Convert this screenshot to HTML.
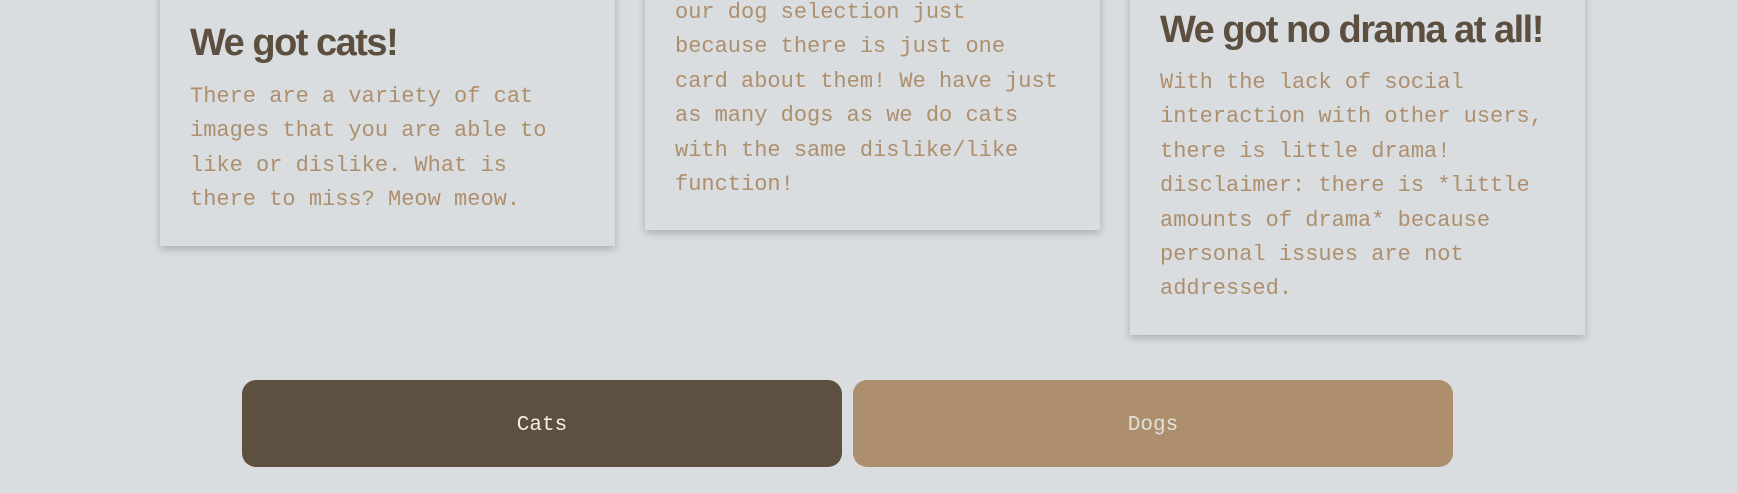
<!DOCTYPE html>
<html><head><meta charset="utf-8"><style>
html,body{margin:0;padding:0;}
body{width:1737px;height:493px;background:#dadde0;position:relative;overflow:hidden;}
.card{position:absolute;width:455px;background:#dadde0;box-shadow:0 3px 8px rgba(0,0,0,0.22);}
.h{position:absolute;left:30px;font-family:"Liberation Sans",sans-serif;font-weight:bold;font-size:38px;color:#5c4f3f;letter-spacing:-1.5px;white-space:nowrap;line-height:40px;}
.t{position:absolute;left:30px;font-family:"Liberation Mono",monospace;font-size:22px;line-height:34.4px;color:#ad8f6d;white-space:pre;}
.btn{position:absolute;top:380px;height:87px;border-radius:14px;font-family:"Liberation Mono",monospace;font-size:21px;text-align:center;line-height:91px;}
</style></head><body>
<div class="card" style="left:160px;top:-20px;height:266px;">
<div class="h" style="top:43px;">We got cats!</div>
<div class="t" style="top:100px;">There are a variety of cat
images that you are able to
like or dislike. What is
there to miss? Meow meow.</div>
</div>
<div class="card" style="left:645px;top:-20px;height:250px;">
<div class="t" style="left:30px;top:16px;">our dog selection just
because there is just one
card about them! We have just
as many dogs as we do cats
with the same dislike/like
function!</div>
</div>
<div class="card" style="left:1130px;top:-20px;height:355px;">
<div class="h" style="top:30px;">We got no drama at all!</div>
<div class="t" style="top:86px;">With the lack of social
interaction with other users,
there is little drama!
disclaimer: there is *little
amounts of drama* because
personal issues are not
addressed.</div>
</div>
<div class="btn" style="left:242px;width:600px;background:#5d5040;color:#fbeedd;">Cats</div>
<div class="btn" style="left:853px;width:600px;background:#ad8f6d;color:#e2e0dc;">Dogs</div>
</body></html>
